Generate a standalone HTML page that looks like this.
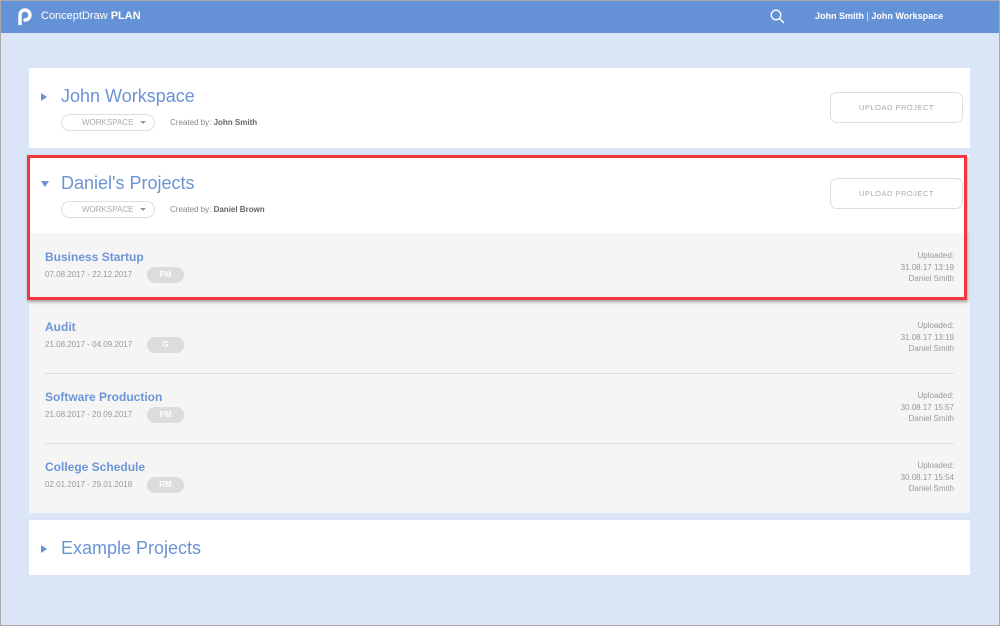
<!DOCTYPE html>
<html><head><meta charset="utf-8"><style>
*{margin:0;padding:0;box-sizing:border-box}
body{width:1000px;height:626px;overflow:hidden;background:#dae6f8;font-family:"Liberation Sans",sans-serif;position:relative}
.frame{position:absolute;left:0;top:0;width:1000px;height:626px;border:1px solid #aaa;pointer-events:none}
.hdr{position:absolute;left:0;top:0;width:1000px;height:33px;background:#6592d6;color:#fff}
.abs{position:absolute}
.card{position:absolute;left:29px;width:941px;background:#fff}
.title{position:absolute;left:32px;font-size:18px;color:#6a93d3;white-space:nowrap}
.tri{position:absolute;left:12px;width:0;height:0}
.tri.r{border-top:4px solid transparent;border-bottom:4px solid transparent;border-left:6px solid #6a93d3}
.tri.d{border-left:4px solid transparent;border-right:4px solid transparent;border-top:6px solid #6a93d3}
.ws{position:absolute;left:32px;width:94px;height:17px;border:1px solid #ddd;border-radius:9px;font-size:8px;color:#aaa;line-height:15px;padding-left:20px}
.ws:after{content:"";position:absolute;right:8px;top:6px;border-left:3px solid transparent;border-right:3px solid transparent;border-top:3px solid #999}
.cb{position:absolute;left:141px;font-size:8px;color:#888}
.cb b{color:#666}
.up{position:absolute;left:801px;width:133px;height:31px;border:1px solid #ddd;border-radius:7px;font-size:7.5px;color:#aaa;text-align:center;line-height:29px;letter-spacing:.5px}
.row{position:absolute;left:0;width:941px;height:70px;background:#f5f5f5}
.row .n{position:absolute;left:16px;top:17px;font-size:12px;font-weight:bold;color:#6d95d6}
.row .dt{position:absolute;left:16px;top:37px;font-size:8px;color:#999}
.row .tag{position:absolute;left:118px;top:34px;width:37px;height:16px;border-radius:8px;background:#dcdcdc;color:#fff;font-size:8px;font-weight:bold;text-align:center;line-height:16px}
.row .r{position:absolute;right:16px;top:17px;font-size:8px;color:#999;text-align:right;line-height:11.5px}
.sep{position:absolute;left:16px;right:16px;top:0;height:1px;background:#ddd}
</style></head><body>
<div class="hdr">
<svg class="abs" style="left:17px;top:7px" width="16" height="18" viewBox="0 0 16 18"><path d="M3 17V8a5 5 0 1 1 5 5" fill="none" stroke="#fff" stroke-width="3.4" stroke-linecap="round"/></svg>
<div class="abs" style="left:41px;top:10px;font-size:11px">ConceptDraw <b>PLAN</b></div>
<svg class="abs" style="left:770px;top:9px" width="15" height="15" viewBox="0 0 15 15"><circle cx="6" cy="6" r="4.8" fill="none" stroke="#fff" stroke-width="1.3"/><path d="M9.5 9.5L14 14" stroke="#fff" stroke-width="1.4"/></svg>
<div class="abs" style="left:815px;top:11px;font-size:9px;font-weight:bold">John Smith <span style="font-weight:normal">|</span> John Workspace</div>
</div>

<div class="card" style="top:68px;height:80px">
<div class="tri r" style="top:25px"></div>
<div class="title" style="top:18px">John Workspace</div>
<div class="ws" style="top:46px">WORKSPACE</div>
<div class="cb" style="top:50px">Created by: <b>John Smith</b></div>
<div class="up" style="top:24px">UPLOAD PROJECT</div>
</div>

<div class="card" style="top:155px;height:358px">
<div class="tri d" style="top:26px"></div>
<div class="title" style="top:18px">Daniel's Projects</div>
<div class="ws" style="top:46px">WORKSPACE</div>
<div class="cb" style="top:50px">Created by: <b>Daniel Brown</b></div>
<div class="up" style="top:23px">UPLOAD PROJECT</div>
<div class="row" style="top:78px"><div class="n">Business Startup</div><div class="dt">07.08.2017 - 22.12.2017</div><div class="tag">PM</div><div class="r">Uploaded:<br>31.08.17 13:19<br>Daniel Smith</div></div>
<div class="row" style="top:148px"><div class="n">Audit</div><div class="dt">21.08.2017 - 04.09.2017</div><div class="tag">G</div><div class="r">Uploaded:<br>31.08.17 13:19<br>Daniel Smith</div></div>
<div class="row" style="top:218px"><div class="sep"></div><div class="n">Software Production</div><div class="dt">21.08.2017 - 20.09.2017</div><div class="tag">PM</div><div class="r">Uploaded:<br>30.08.17 15:57<br>Daniel Smith</div></div>
<div class="row" style="top:288px"><div class="sep"></div><div class="n">College Schedule</div><div class="dt">02.01.2017 - 29.01.2018</div><div class="tag">RM</div><div class="r">Uploaded:<br>30.08.17 15:54<br>Daniel Smith</div></div>
</div>

<div class="abs" style="left:27px;top:155px;width:940px;height:145px;border:3px solid #f0383d;box-shadow:1px 2px 3px rgba(0,0,0,.35)"></div>

<div class="card" style="top:520px;height:55px">
<div class="tri r" style="top:25px"></div>
<div class="title" style="top:18px">Example Projects</div>
</div>
<div class="frame"></div>
</body></html>
